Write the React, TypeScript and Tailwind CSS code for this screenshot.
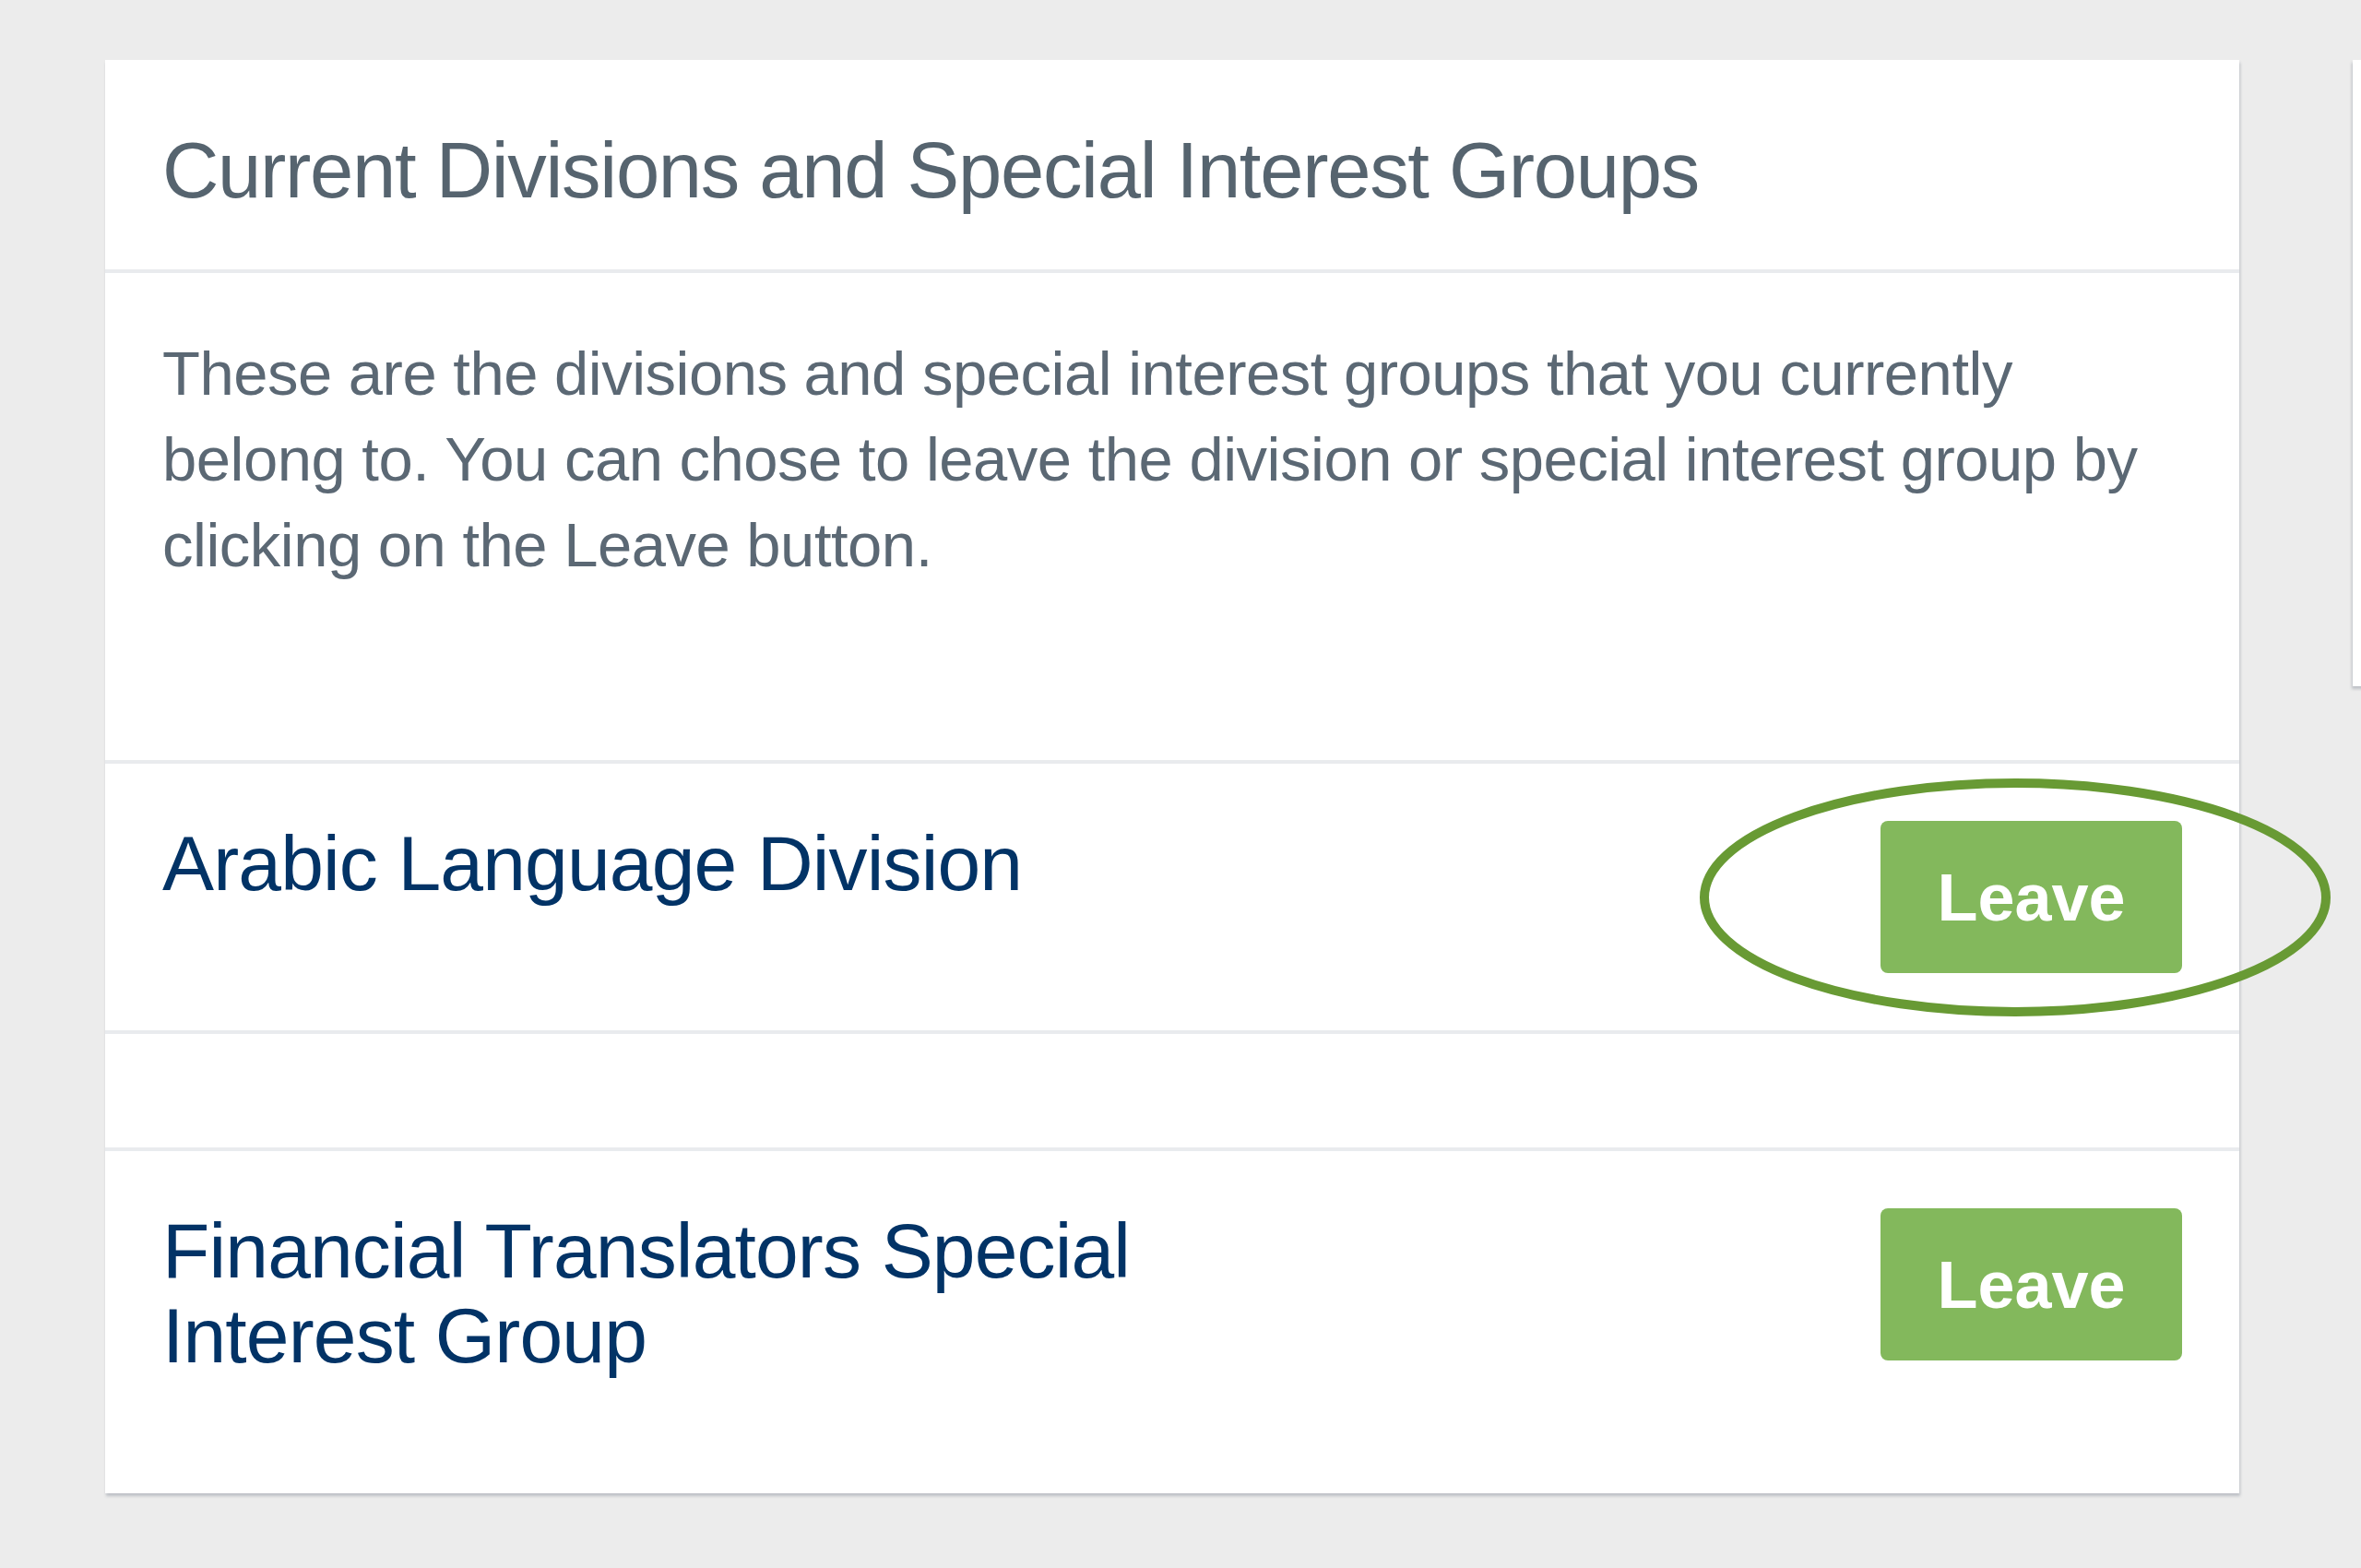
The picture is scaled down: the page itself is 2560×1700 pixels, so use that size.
const groups = [
  { id: 'arabic', name: 'Arabic Language Division', highlighted: true },
  { id: 'financial', name: 'Financial Translators Special Interest Group', highlighted: false },
]

function LeaveButton({ highlighted }: { highlighted?: boolean }) {
  return (
    <div className="relative shrink-0">
      <button className="w-[327px] h-[165px] rounded-[8px] bg-[#83b85c] text-white text-[72px] font-bold leading-none">
        Leave
      </button>
      {highlighted && (
        <svg
          className="absolute left-[-197px] top-[-47px] pointer-events-none"
          width="686"
          height="260"
          viewBox="0 0 686 260"
        >
          <ellipse cx="343" cy="130" rx="337" ry="124" fill="none" stroke="#689a34" strokeWidth="10" />
        </svg>
      )}
    </div>
  )
}

export default function App() {
  return (
    <div className="min-h-screen w-full overflow-hidden bg-[#ececec] font-['Liberation_Sans',Arial,sans-serif]">
      <div className="flex items-start pt-[65px] pl-[114px]">
        {/* Main card */}
        <div className="w-[2314px] shrink-0 bg-white shadow-[1px_3px_3px_rgba(70,80,100,0.28)]">
          {/* Header */}
          <div className="pt-[77px] pb-[65px] px-[62px] border-b-4 border-[#e9ebee]">
            <h1 className="text-[85px] leading-[85px] tracking-[-1.3px] text-[#56646f]">
              Current Divisions and Special Interest Groups
            </h1>
          </div>

          {/* Intro */}
          <div className="pt-[62px] pb-[187px] px-[62px] border-b-4 border-[#e9ebee]">
            <p className="text-[67px] leading-[93px] tracking-[-0.5px] text-[#5b6874]">
              These are the divisions and special interest groups that you currently belong to. You can chose to leave the division or special interest group by clicking on the Leave button.
            </p>
          </div>

          {/* Row 1 */}
          <div className="flex items-start justify-between p-[62px] border-b-4 border-[#e9ebee]">
            <h2 className="basis-1/2 text-[84px] leading-[92px] tracking-[-0.85px] text-[#023366]">{groups[0].name}</h2>
            <LeaveButton highlighted={groups[0].highlighted} />
          </div>

          {/* Spacer row */}
          <div className="h-[127px] border-b-4 border-[#e9ebee]" />

          {/* Row 2 */}
          <div className="flex items-start justify-between pt-[62px] pb-[125px] px-[62px]">
            <h2 className="basis-1/2 text-[84px] leading-[92px] tracking-[-0.85px] text-[#023366]">{groups[1].name}</h2>
            <LeaveButton highlighted={groups[1].highlighted} />
          </div>
        </div>

        {/* Side panel peeking in from the right */}
        <div className="ml-[123px] w-[200px] h-[679px] shrink-0 bg-white shadow-[-1px_3px_3px_rgba(70,80,100,0.28)]" />
      </div>
    </div>
  )
}
